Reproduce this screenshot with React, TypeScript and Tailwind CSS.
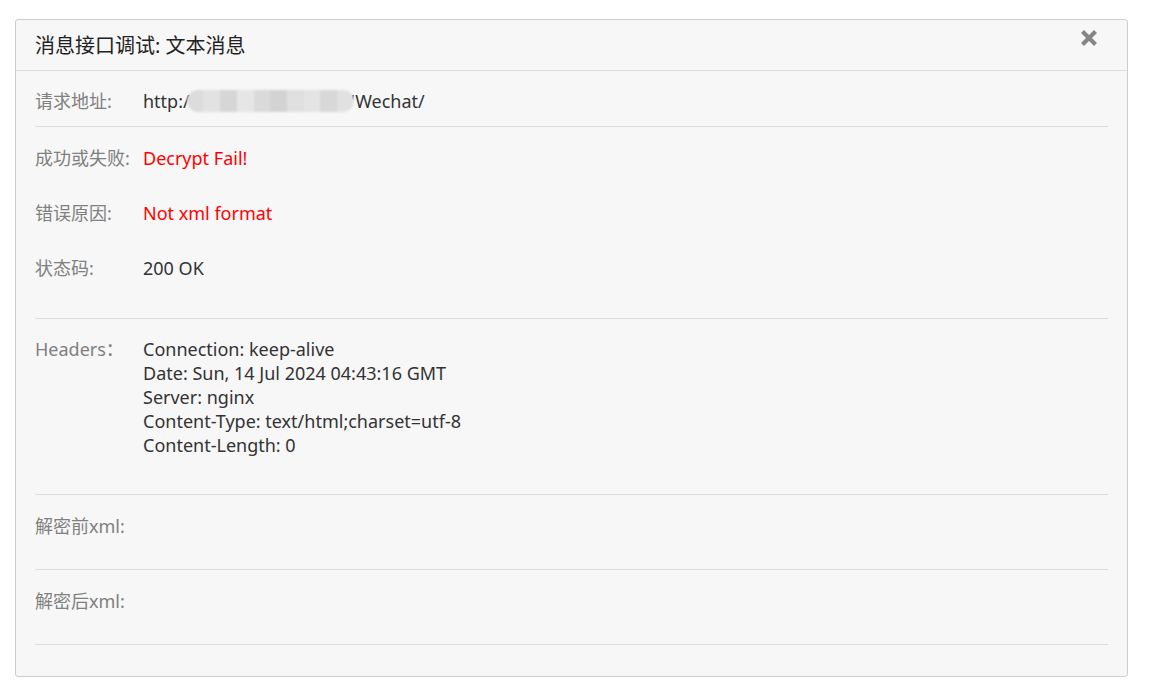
const font = {
  fontFamily: '"Noto Sans", "Noto Sans CJK SC", sans-serif',
};

type Row = { label: string; value?: string; red?: boolean };

const Field = ({ label, children }: { label: string; children?: React.ReactNode }) => (
  <div className="flex leading-6 text-[18px]">
    <div className="w-[108px] shrink-0 text-[#808080]">{label}</div>
    <div className="text-[#333]">{children}</div>
  </div>
);

const resultRows: Row[] = [
  { label: "成功或失败:", value: "Decrypt Fail!", red: true },
  { label: "错误原因:", value: "Not xml format", red: true },
  { label: "状态码:", value: "200 OK" },
];

const headerLines = [
  "Connection: keep-alive",
  "Date: Sun, 14 Jul 2024 04:43:16 GMT",
  "Server: nginx",
  "Content-Type: text/html;charset=utf-8",
  "Content-Length: 0",
];

// mosaic blocks standing in for the masked host name
const mosaic = ["#dcdcdc", "#e2e2e2", "#d6d6d6", "#e6e6e6", "#dadada", "#d3d3d3", "#e0e0e0", "#e4e4e4", "#d8d8d8", "#e1e1e1"];

const App = () => {
  return (
    <div className="min-h-[681px] bg-white pt-[19px] pl-[15px] pr-[26px]" style={font}>
      <div className="bg-[#f7f7f7] border border-[#cccccc] rounded-[3px]">
        {/* title bar */}
        <div className="relative h-[51px] border-b border-[#dddddd] px-[19px] flex items-center">
          <h3 className="text-[20px] text-[#222] pt-[1px]">消息接口调试: 文本消息</h3>
          <button className="absolute right-[28px] top-[8px] w-[20px] h-[20px] flex items-center justify-center">
            <svg width="18" height="18" viewBox="0 0 18 18">
              <path d="M2.5 2.5 L15.5 15.5 M15.5 2.5 L2.5 15.5" stroke="#858585" strokeWidth="4.2" strokeLinecap="butt" />
            </svg>
          </button>
        </div>

        <div className="px-[19px] pb-[31px]">
          {/* request url */}
          <div className="border-b border-[#dddddd] pt-[18px] pb-[13px]">
            <Field label="请求地址:">
              <span className="inline-flex items-center">
                http:/
                <span className="inline-flex h-[22px] w-[167px] rounded-full overflow-hidden blur-[1px] mx-[-3px]">
                  {mosaic.map((c, i) => (
                    <span key={i} className="flex-1 h-full" style={{ background: c }} />
                  ))}
                </span>
                'Wechat/
              </span>
            </Field>
          </div>

          {/* result */}
          <div className="border-b border-[#dddddd] pt-[19px] pb-[38px] flex flex-col gap-[31px]">
            {resultRows.map((r) => (
              <Field key={r.label} label={r.label}>
                <span className={r.red ? "text-[#ff0000]" : ""}>{r.value}</span>
              </Field>
            ))}
          </div>

          {/* headers */}
          <div className="border-b border-[#dddddd] pt-[18px] pb-[37px]">
            <Field label="Headers：">
              {headerLines.map((l) => (
                <div key={l}>{l}</div>
              ))}
            </Field>
          </div>

          <div className="border-b border-[#dddddd] pt-[19px] pb-[31px]">
            <Field label="解密前xml:" />
          </div>
          <div className="border-b border-[#dddddd] pt-[19px] pb-[31px]">
            <Field label="解密后xml:" />
          </div>
        </div>
      </div>
    </div>
  );
};

export default App;
